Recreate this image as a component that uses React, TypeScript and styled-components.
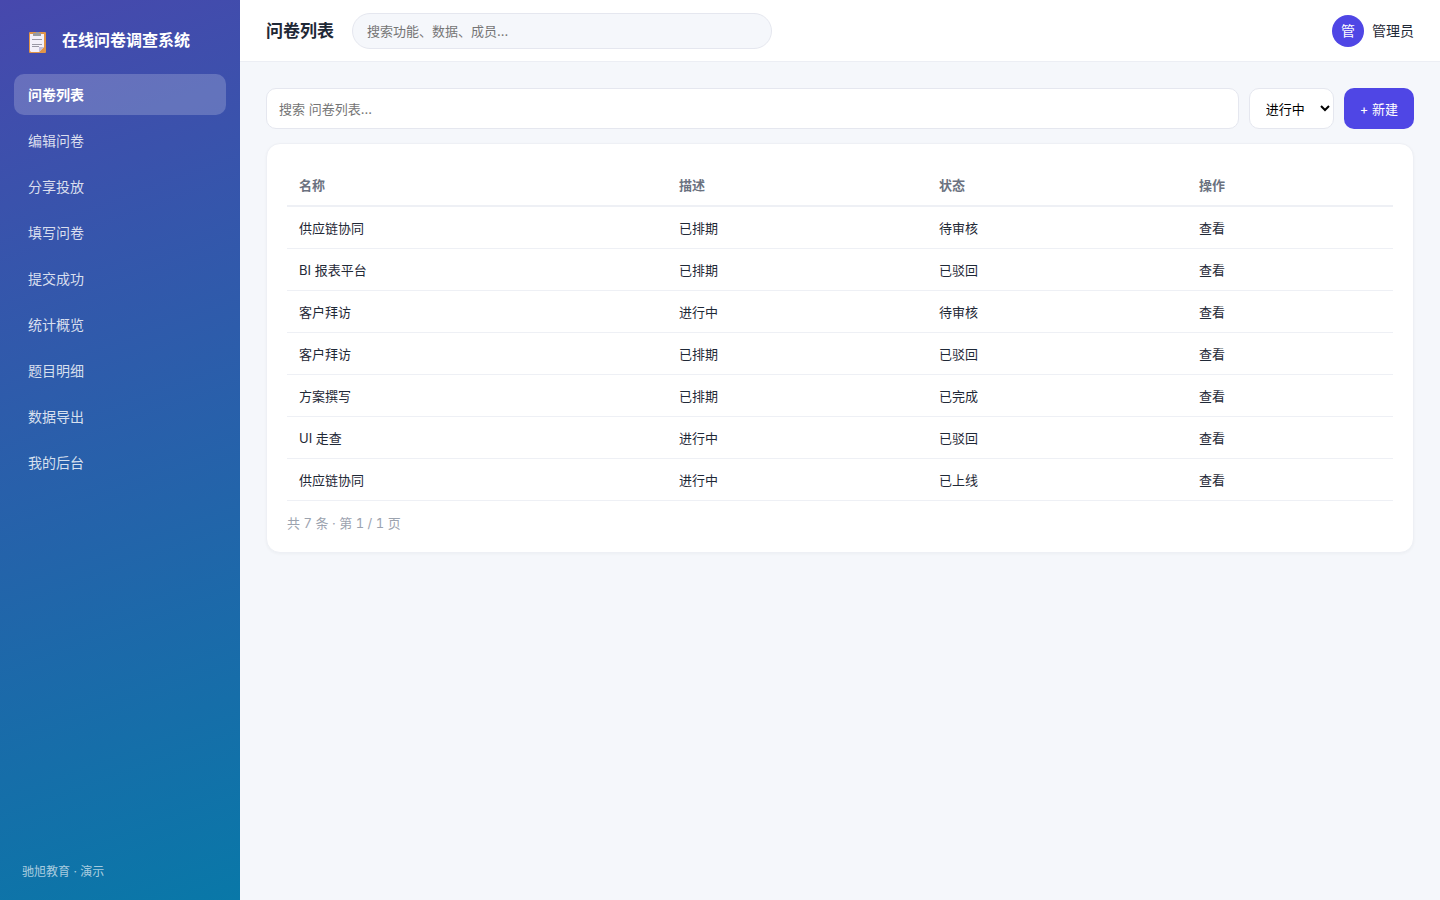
import React from "react";
import styled, { createGlobalStyle } from "styled-components";

const GlobalStyle = createGlobalStyle`
  *, *::before, *::after { box-sizing: border-box; }
  body {
    margin: 0;
    background: #f5f7fb;
    color: #1f2937;
    font-family: Inter, "Noto Sans CJK SC", sans-serif;
    font-size: 14px;
    line-height: 21px;
  }
  button, input, select { font-family: inherit; }
`;

const Shell = styled.div`
  display: flex;
  min-height: 100vh;
`;

const Sidebar = styled.aside`
  display: flex;
  flex-direction: column;
  flex: 0 0 240px;
  padding: 22px 14px 18px;
  color: #fff;
  background: linear-gradient(160deg, #4748ad 0%, #0978a8 100%);
`;

const Brand = styled.div`
  display: flex;
  align-items: center;
  gap: 12px;
  height: 36px;
  margin-bottom: 16px;
  padding: 0 12px;
  font-size: 16px;
  font-weight: 700;
`;

const BrandIcon = styled.svg`
  width: 24px;
  height: 24px;
  margin-top: 4px;
`;

const Nav = styled.nav`
  display: flex;
  flex-direction: column;
  gap: 5px;
`;

const NavLink = styled.a<{ $active?: boolean }>`
  padding: 10px 14px;
  border-radius: 10px;
  color: ${(p) => (p.$active ? "#fff" : "rgba(255, 255, 255, 0.82)")};
  background: ${(p) => (p.$active ? "rgba(255, 255, 255, 0.2)" : "transparent")};
  font-weight: ${(p) => (p.$active ? 700 : 400)};
  text-decoration: none;
`;

const SidebarFooter = styled.div`
  margin-top: auto;
  padding: 0 8px;
  color: rgba(255, 255, 255, 0.65);
  font-size: 12px;
`;

const Main = styled.div`
  flex: 1;
  min-width: 0;
`;

const TopBar = styled.header`
  display: flex;
  align-items: center;
  gap: 18px;
  height: 62px;
  padding: 0 26px;
  background: #fff;
  border-bottom: 1px solid #eceef4;
`;

const Title = styled.h1`
  margin: 0;
  padding-top: 2px;
  font-size: 17px;
  font-weight: 700;
`;

const GlobalSearch = styled.input`
  width: 420px;
  height: 36px;
  padding: 0 14px;
  border: 1px solid #e5e7ef;
  border-radius: 18px;
  background: #f5f7fb;
  font-size: 13px;
  &::placeholder { color: #757575; }
`;

const User = styled.div`
  display: flex;
  align-items: center;
  gap: 8px;
  margin-left: auto;
`;

const Avatar = styled.span`
  display: grid;
  place-items: center;
  width: 32px;
  height: 32px;
  border-radius: 50%;
  background: #4f46e5;
  color: #fff;
`;

const Content = styled.main`
  padding: 26px;
`;

const Toolbar = styled.div`
  display: flex;
  gap: 10px;
  height: 41px;
  margin-bottom: 14px;
`;

const Filter = styled.input`
  flex: 1;
  min-width: 0;
  padding: 0 12px;
  border: 1px solid #e5e7ef;
  border-radius: 10px;
  background: #fff;
  font-size: 13px;
  &::placeholder { color: #757575; }
`;

const StatusSelect = styled.select`
  width: 85px;
  padding: 0 0 0 12px;
  border: 1px solid #e5e7ef;
  border-radius: 10px;
  background: #fff;
  color: #000;
  font-size: 13px;
`;

const PrimaryButton = styled.button`
  padding: 0 16px;
  border: 0;
  border-radius: 10px;
  background: #4f46e5;
  color: #fff;
  font-size: 13px;
`;

const Card = styled.section`
  padding: 20px;
  border: 1px solid #eef0f5;
  border-radius: 14px;
  background: #fff;
  box-shadow: 0 1px 3px rgba(31, 41, 55, 0.04);
`;

const Table = styled.table`
  width: 100%;
  border-collapse: separate;
  border-spacing: 0;
  table-layout: fixed;
  font-size: 13px;
`;

const HeadCell = styled.th<{ $width?: string }>`
  width: ${(p) => p.$width ?? "auto"};
  height: 43px;
  padding: 2px 12px 0;
  border-bottom: 2px solid #eef0f5;
  color: #6b7280;
  font-weight: 700;
  text-align: left;
`;

const Cell = styled.td`
  height: 42px;
  padding: 2px 12px 0;
  border-bottom: 1px solid #eef0f5;
`;

const RowLink = styled.a`
  color: inherit;
  text-decoration: none;
`;

const Pager = styled.div`
  margin-top: 13px;
  color: #9ca3af;
  font-size: 13px;
  font-variant-numeric: tabular-nums;
  line-height: 18px;
`;

const navItems = [
  "问卷列表", "编辑问卷", "分享投放", "填写问卷", "提交成功",
  "统计概览", "题目明细", "数据导出", "我的后台",
];

const rows = [
  ["供应链协同", "已排期", "待审核"],
  ["BI 报表平台", "已排期", "已驳回"],
  ["客户拜访", "进行中", "待审核"],
  ["客户拜访", "已排期", "已驳回"],
  ["方案撰写", "已排期", "已完成"],
  ["UI 走查", "进行中", "已驳回"],
  ["供应链协同", "进行中", "已上线"],
];

function Clipboard() {
  return (
    <BrandIcon viewBox="0 0 24 24" aria-hidden="true">
      <rect x="3" y="2" width="17" height="21" rx="1" fill="#e09448" />
      <path d="M4 4H18V17L13 22H5L4 21Z" fill="#f3f0fa" />
      <path d="M18 17L13 22V17Z" fill="#c3bfdc" />
      <path d="M7 3H10V2H13V3H15V6H7Z" fill="#999a9f" />
      <path d="M6 9.500H16M6 14.500H16M6 16.500H13" stroke="#9a98a5" />
    </BrandIcon>
  );
}

export default function App() {
  return (
    <>
      <GlobalStyle />
      <Shell>
        <Sidebar>
          <Brand><Clipboard />在线问卷调查系统</Brand>
          <Nav>
            {navItems.map((item, i) => (
              <NavLink key={item} href="#" $active={i === 0}>{item}</NavLink>
            ))}
          </Nav>
          <SidebarFooter>驰旭教育 · 演示</SidebarFooter>
        </Sidebar>
        <Main>
          <TopBar>
            <Title>问卷列表</Title>
            <GlobalSearch type="search" aria-label="全局搜索" placeholder="搜索功能、数据、成员..." />
            <User><Avatar>管</Avatar>管理员</User>
          </TopBar>
          <Content>
            <Toolbar>
              <Filter type="search" aria-label="搜索问卷" placeholder="搜索 问卷列表..." />
              <StatusSelect aria-label="状态" defaultValue="进行中">
                <option>进行中</option>
                <option>已完成</option>
              </StatusSelect>
              <PrimaryButton type="button">+ 新建</PrimaryButton>
            </Toolbar>
            <Card>
              <Table>
                <thead>
                  <tr>
                    <HeadCell scope="col">名称</HeadCell>
                    <HeadCell scope="col" $width="260px">描述</HeadCell>
                    <HeadCell scope="col" $width="260px">状态</HeadCell>
                    <HeadCell scope="col" $width="206px">操作</HeadCell>
                  </tr>
                </thead>
                <tbody>
                  {rows.map((row, i) => (
                    <tr key={i}>
                      {row.map((text, j) => <Cell key={j}>{text}</Cell>)}
                      <Cell><RowLink href="#">查看</RowLink></Cell>
                    </tr>
                  ))}
                </tbody>
              </Table>
              <Pager>共 7 条 · 第 1 / 1 页</Pager>
            </Card>
          </Content>
        </Main>
      </Shell>
    </>
  );
}
